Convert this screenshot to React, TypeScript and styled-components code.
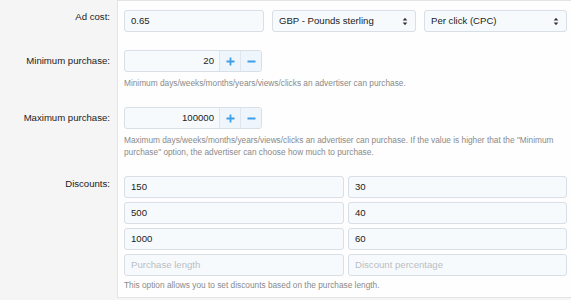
import React from "react";
import styled, { createGlobalStyle } from "styled-components";

const Global = createGlobalStyle`
  html, body { margin: 0; padding: 0; background: #f5f5f5; }
  body { font-family: "Liberation Sans", Arial, sans-serif; color: #222; }
  * { box-sizing: border-box; }
`;

const Form = styled.div`
  width: 571px;
  display: flex;
  flex-direction: column;
`;

const Row = styled.div`
  display: grid;
  grid-template-columns: 117px 1fr;
`;

const Label = styled.div<{ $top: number }>`
  background: #f5f5f5;
  text-align: right;
  padding: ${(p) => p.$top}px 7px 0 0;
  font-size: 9.6px;
  line-height: 12px;
  color: #222;
`;

const Field = styled.div<{ $first?: boolean; $last?: boolean }>`
  background: #fefefe;
  border-left: 1px solid #e4e4e4;
  border-top: ${(p) => (p.$first ? "1px solid #e4e4e4" : "none")};
  border-bottom: ${(p) => (p.$last ? "1px solid #e4e4e4" : "none")};
  padding: 9px 4px ${(p) => (p.$last ? 6 : 9)}px 6px;
`;

const Three = styled.div`
  display: grid;
  grid-template-columns: 140px 144px 143px;
  gap: 8px;
`;

const TextInput = styled.div<{ $align?: string; $placeholder?: boolean }>`
  height: 22px;
  border: 1px solid #d8dfe6;
  border-radius: 3px;
  background: #f7fafd;
  font-size: 9.6px;
  line-height: 20px;
  padding: 0 6px;
  color: ${(p) => (p.$placeholder ? "#b9bec3" : "#222")};
  text-align: ${(p) => p.$align || "left"};
  white-space: nowrap;
  overflow: hidden;
`;

const Select = styled.div`
  height: 22px;
  border: 1px solid #d8dfe6;
  border-radius: 3px;
  background: #f7fafd;
  font-size: 9.6px;
  line-height: 20px;
  padding: 0 7px 0 6px;
  display: flex;
  align-items: center;
  justify-content: space-between;
  color: #222;
`;

const Spinner = styled.div`
  display: flex;
  width: 138px;
  height: 22px;
  border: 1px solid #d8dfe6;
  border-radius: 3px;
  background: #f7fafd;
  overflow: hidden;
`;

const SpinValue = styled.div`
  flex: 1;
  font-size: 9.6px;
  line-height: 20px;
  text-align: right;
  padding: 0 5px;
`;

const SpinButton = styled.div`
  width: 21px;
  border-left: 1px solid #dfe6ed;
  background: #eef5fb;
  display: flex;
  align-items: center;
  justify-content: center;
`;

const Help = styled.div<{ $tight?: boolean }>`
  margin-top: ${(p) => (p.$tight ? 3 : 5)}px;
  font-size: 8.3px;
  line-height: 12px;
  color: #8a8a8a;
`;

const Pairs = styled.div`
  display: grid;
  grid-template-columns: 220px 219px;
  column-gap: 4px;
  row-gap: 4px;
`;

const Arrows = () => (
  <svg width="6" height="9" viewBox="0 0 6 9">
    <path d="M3 0.8 L5.3 3.6 L0.7 3.6 Z" fill="#333" />
    <path d="M3 8.2 L5.3 5.4 L0.7 5.4 Z" fill="#333" />
  </svg>
);

const Plus = () => (
  <svg width="9" height="9" viewBox="0 0 9 9">
    <path d="M4.5 0.5 V8.5 M0.5 4.5 H8.5" stroke="#3f9fe6" strokeWidth="1.8" />
  </svg>
);

const Minus = () => (
  <svg width="9" height="9" viewBox="0 0 9 9">
    <path d="M0.5 4.5 H8.5" stroke="#3f9fe6" strokeWidth="1.8" />
  </svg>
);

const Stepper = ({ value }: { value: string }) => (
  <Spinner>
    <SpinValue>{value}</SpinValue>
    <SpinButton>
      <Plus />
    </SpinButton>
    <SpinButton>
      <Minus />
    </SpinButton>
  </Spinner>
);

const discounts: [string, string, boolean][] = [
  ["150", "30", false],
  ["500", "40", false],
  ["1000", "60", false],
  ["Purchase length", "Discount percentage", true],
];

export default function App() {
  return (
    <>
      <Global />
      <Form>
        <Row>
          <Label $top={11}>Ad cost:</Label>
          <Field $first>
            <Three>
              <TextInput>0.65</TextInput>
              <Select>
                <span>GBP - Pounds sterling</span>
                <Arrows />
              </Select>
              <Select>
                <span>Per click (CPC)</span>
                <Arrows />
              </Select>
            </Three>
          </Field>
        </Row>
        <Row>
          <Label $top={14}>Minimum purchase:</Label>
          <Field>
            <Stepper value="20" />
            <Help>Minimum days/weeks/months/years/views/clicks an advertiser can purchase.</Help>
          </Field>
        </Row>
        <Row>
          <Label $top={14}>Maximum purchase:</Label>
          <Field>
            <Stepper value="100000" />
            <Help>
              Maximum days/weeks/months/years/views/clicks an advertiser can purchase. If the value is higher that the "Minimum
              purchase" option, the advertiser can choose how much to purchase.
            </Help>
          </Field>
        </Row>
        <Row>
          <Label $top={11}>Discounts:</Label>
          <Field $last>
            <Pairs>
              {discounts.map(([a, b, ph]) => (
                <React.Fragment key={a}>
                  <TextInput $placeholder={ph}>{a}</TextInput>
                  <TextInput $placeholder={ph}>{b}</TextInput>
                </React.Fragment>
              ))}
            </Pairs>
            <Help $tight>This option allows you to set discounts based on the purchase length.</Help>
          </Field>
        </Row>
      </Form>
    </>
  );
}
